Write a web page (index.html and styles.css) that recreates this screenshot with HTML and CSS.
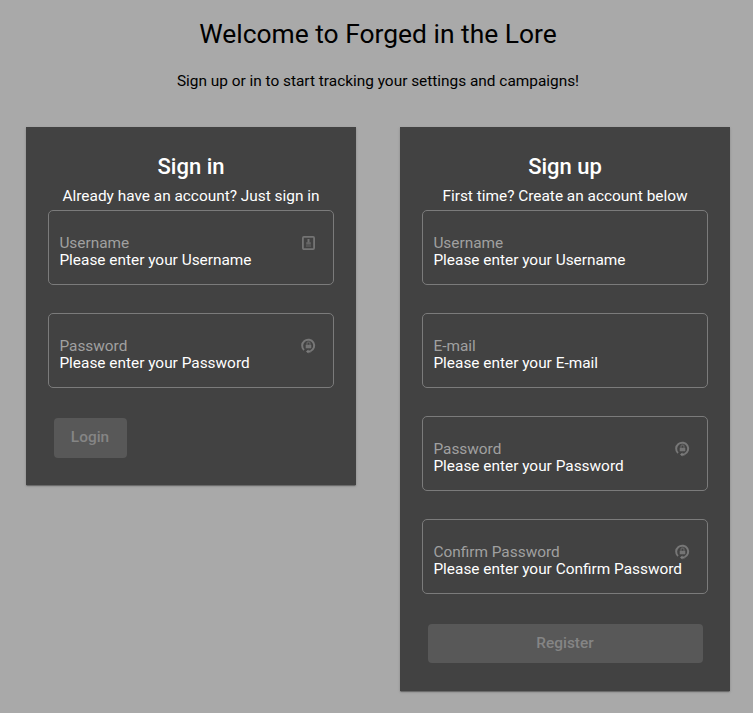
FILE: index.html
```html
<!DOCTYPE html>
<html lang="en">
<head>
<meta charset="utf-8">
<title>Forged in the Lore</title>
<link rel="stylesheet" href="styles.css">
</head>
<body>
<svg class="defs" aria-hidden="true">
  <symbol id="key" viewBox="0 0 16 16">
    <path d="M4 12A6 6 0 1 1 10.5 13.2" fill="none" stroke="#777" stroke-width="2"/>
    <path d="M5.7 6.8h5.6v3.5H5.7z" fill="#747474"/>
    <path d="M7 7V5.5a1.5 1.5 0 0 1 3 0V7" fill="none" stroke="#626262" stroke-width="1.4"/>
    <path d="M6 13.5 8.4 11.5v1h2.2v2H8.4v1z" fill="#7c7c7c"/>
  </symbol>
  <symbol id="card" viewBox="0 0 16 16">
    <rect x="2.9" y="1.9" width="11.2" height="12.2" rx="1" fill="none" stroke="#747474" stroke-width="1.8"/>
    <path d="M8.5 4v5" stroke="#717171" stroke-width="2"/>
    <path d="M6.2 7.2h4.6v2.4H6.2z" fill="#666"/>
    <path d="M6 11h5" stroke="#666"/>
  </symbol>
</svg>
<header>
  <h1>Welcome to Forged in the Lore</h1>
  <p>Sign up or in to start tracking your settings and campaigns!</p>
</header>
<main>
  <form class="card">
    <h2>Sign in</h2>
    <p class="sub">Already have an account? Just sign in</p>
    <div class="field"><span class="label">Username</span><span class="hint">Please enter your Username</span><svg class="icon"><use href="#card"/></svg></div>
    <div class="field"><span class="label">Password</span><span class="hint">Please enter your Password</span><svg class="icon"><use href="#key"/></svg></div>
    <button class="login" type="button" disabled>Login</button>
  </form>
  <form class="card">
    <h2>Sign up</h2>
    <p class="sub">First time? Create an account below</p>
    <div class="field"><span class="label">Username</span><span class="hint">Please enter your Username</span></div>
    <div class="field"><span class="label">E-mail</span><span class="hint">Please enter your E-mail</span></div>
    <div class="field"><span class="label">Password</span><span class="hint">Please enter your Password</span><svg class="icon"><use href="#key"/></svg></div>
    <div class="field"><span class="label">Confirm Password</span><span class="hint">Please enter your Confirm Password</span><svg class="icon"><use href="#key"/></svg></div>
    <button class="register" type="button" disabled>Register</button>
  </form>
</main>
</body>
</html>
```
FILE: styles.css
```css
* { box-sizing: border-box; }
body { margin: 0; height: 713px; overflow: hidden; background: #a9a9a9; font-family: Roboto, sans-serif; font-size: 15.4px; color: #000; }
.defs { position: absolute; width: 0; height: 0; }
h1, h2, p { margin: 0; }
header { text-align: center; padding: 18px 0 0 3px; }
h1 { font-size: 26.4px; line-height: 32px; font-weight: 400; }
header p { margin-top: 21px; line-height: 20px; }
main { display: flex; align-items: flex-start; gap: 44px; padding: 36px 0 0 26px; }
.card { width: 330px; padding: 26px 22px 28px; background: #424242; color: #fff; box-shadow: 0 2px 1px -1px rgba(0,0,0,.2), 0 1px 1px rgba(0,0,0,.14), 0 1px 3px rgba(0,0,0,.12); }
h2 { font-size: 22px; line-height: 28px; font-weight: 500; text-align: center; }
.sub { line-height: 20px; margin: 5px 0 4px; text-align: center; }
.field { position: relative; width: 286px; height: 75px; margin-bottom: 28px; padding: 24px 10.4px 0; border: 1px solid #7b7b7b; border-radius: 5px; line-height: 17px; white-space: nowrap; }
.label, .hint { display: block; }
.label { color: #a0a0a0; }
.icon { position: absolute; width: 16px; height: 16px; right: 17px; top: 24px; }
button { display: block; margin-left: 6px; padding: 0 1px 2px 0; border: 0; border-radius: 4px; background: #585858; color: #858585; font: 500 15.4px Roboto, sans-serif; }
.login { width: 73px; height: 40px; margin: 30px 0 -1px 6px; }
.register { width: 275px; height: 39px; margin-top: 30px; }
```
